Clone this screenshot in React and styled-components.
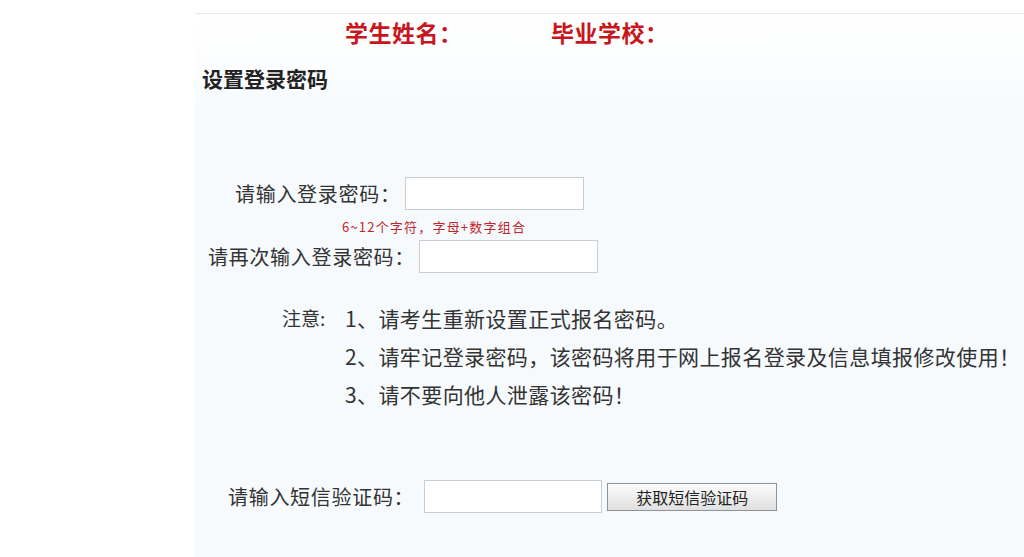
import styled, { createGlobalStyle } from "styled-components";

const GlobalStyle = createGlobalStyle`
  html, body {
    margin: 0;
    padding: 0;
    background: #ffffff;
  }
  body {
    font-family: "Noto Sans CJK SC", "Noto Sans", sans-serif;
    color: #333;
  }
`;

const Page = styled.div`
  width: 1024px;
  height: 557px;
  overflow: hidden;
  display: flex;
`;

const Gutter = styled.div`
  width: 195px;
  flex-shrink: 0;
  background: #ffffff;
`;

const Panel = styled.main`
  flex: 1;
  margin-top: 13px;
  border-top: 1px solid #e6e8ea;
  background: linear-gradient(180deg, #ffffff 0px, #fbfdfe 60px, #f6fafd 100px);
  display: flex;
  flex-direction: column;
`;

const Header = styled.div`
  display: grid;
  grid-template-columns: 206px auto;
  padding-left: 150px;
  height: 36px;
  align-items: center;
`;

const StudentTitle = styled.h2`
  margin: 0;
  font-size: 23px;
  font-weight: 700;
  color: #c8161d;
  letter-spacing: 0.5px;
`;

const SectionTitle = styled.h1`
  margin: 14px 0 0 7px;
  font-size: 21px;
  font-weight: 700;
  color: #222;
  line-height: 28px;
`;

const FormRow = styled.div`
  display: flex;
  align-items: center;
  padding-left: ${(p) => p.$indent}px;
  margin-top: ${(p) => p.$top}px;
`;

const Label = styled.label`
  font-size: 20px;
  color: #333;
  white-space: nowrap;
  letter-spacing: 0.7px;
  margin-right: ${(p) => p.$gap || 4}px;
`;

const TextInput = styled.input`
  box-sizing: border-box;
  width: ${(p) => p.$width || 179}px;
  height: 33px;
  border: 1px solid #c9cdd1;
  background: #ffffff;
  outline: none;
`;

const Hint = styled.div`
  margin: 8px 0 0 147px;
  font-size: 13px;
  color: #c0262c;
  line-height: 18px;
  letter-spacing: 1.2px;
`;

const Notes = styled.div`
  display: grid;
  grid-template-columns: 63px auto;
  row-gap: 10px;
  margin: 31px 0 0 87px;
  font-size: 21px;
  line-height: 28px;
  letter-spacing: 0.4px;
  color: #333;
`;

const NoteLead = styled.span`
  grid-column: 1;
  grid-row: 1;
  font-size: 19px;
  letter-spacing: 0;
`;

const NoteItem = styled.span`
  grid-column: 2;
  white-space: nowrap;
`;

const SmsButton = styled.button`
  margin-left: 5px;
  width: 170px;
  height: 28px;
  border: 1px solid #8e9398;
  background: linear-gradient(180deg, #fbfbfb 0%, #eeeeee 50%, #e0e0e0 100%);
  font-family: "Noto Sans CJK SC", sans-serif;
  font-size: 16px;
  color: #222;
  padding: 0;
`;

export default function App() {
  return (
    <>
      <GlobalStyle />
      <Page>
        <Gutter />
        <Panel>
          <Header>
            <StudentTitle>学生姓名：</StudentTitle>
            <StudentTitle>毕业学校：</StudentTitle>
          </Header>
          <SectionTitle>设置登录密码</SectionTitle>

          <FormRow $indent={40} $top={85}>
            <Label>请输入登录密码：</Label>
            <TextInput type="password" />
          </FormRow>
          <Hint>6~12个字符，字母+数字组合</Hint>
          <FormRow $indent={13} $top={4}>
            <Label>请再次输入登录密码：</Label>
            <TextInput type="password" />
          </FormRow>

          <Notes>
            <NoteLead>注意:</NoteLead>
            <NoteItem>1、请考生重新设置正式报名密码。</NoteItem>
            <NoteItem>2、请牢记登录密码，该密码将用于网上报名登录及信息填报修改使用！</NoteItem>
            <NoteItem>3、请不要向他人泄露该密码！</NoteItem>
          </Notes>

          <FormRow $indent={33} $top={72}>
            <Label $gap={10}>请输入短信验证码：</Label>
            <TextInput type="text" $width={178} />
            <SmsButton type="button">获取短信验证码</SmsButton>
          </FormRow>
        </Panel>
      </Page>
    </>
  );
}
